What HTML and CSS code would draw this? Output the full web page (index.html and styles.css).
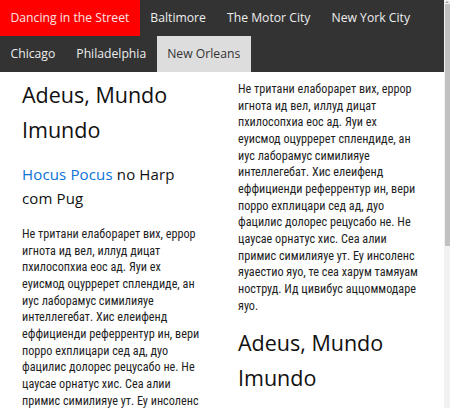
FILE: index.html
```html
<!DOCTYPE html>
<html lang="pt">
<head>
<meta charset="utf-8">
<title>Adeus, Mundo Imundo</title>
<link rel="stylesheet" href="styles.css">
</head>
<body>
<div class="page">
  <nav class="nav">
    <a class="nav-item nav-brand" href="#">Dancing in the Street</a>
    <a class="nav-item" href="#">Baltimore</a>
    <a class="nav-item" href="#">The Motor City</a>
    <a class="nav-item" href="#">New York City</a>
    <a class="nav-item" href="#">Chicago</a>
    <a class="nav-item" href="#">Philadelphia</a>
    <a class="nav-item nav-active" href="#">New Orleans</a>
  </nav>
  <main class="content">
    <section class="col">
      <h1 class="title">Adeus, Mundo Imundo</h1>
      <h2 class="subtitle"><a class="link" href="#">Hocus Pocus</a> no Harp com Pug</h2>
      <p class="text">Не тритани елаборарет вих, еррор игнота ид вел, иллуд дицат пхилосопхиа еос ад. Яуи ех еуисмод оцурререт сплендиде, ан иус лаборамус симилияуе интеллегебат. Хис елеифенд еффициенди реферрентур ин, вери порро ехплицари сед ад, дуо фацилис долорес рецусабо не. Не цаусае орнатус хис. Сеа алии примис симилияуе ут. Еу инсоленс яуаестио яуо, те сеа харум тамяуам ноструд. Ид цивибус аццоммодаре яуо.</p>
    </section>
    <section class="col">
      <p class="text">Не тритани елаборарет вих, еррор игнота ид вел, иллуд дицат пхилосопхиа еос ад. Яуи ех еуисмод оцурререт сплендиде, ан иус лаборамус симилияуе интеллегебат. Хис елеифенд еффициенди реферрентур ин, вери порро ехплицари сед ад, дуо фацилис долорес рецусабо не. Не цаусае орнатус хис. Сеа алии примис симилияуе ут. Еу инсоленс яуаестио яуо, те сеа харум тамяуам ноструд. Ид цивибус аццоммодаре яуо.</p>
      <h1 class="title">Adeus, Mundo Imundo</h1>
      <h2 class="subtitle"><a class="link" href="#">Hocus Pocus</a> no Harp com Pug</h2>
      <p class="text">Не тритани елаборарет вих, еррор игнота ид вел, иллуд дицат пхилосопхиа еос ад. Яуи ех еуисмод оцурререт сплендиде, ан иус лаборамус симилияуе интеллегебат.</p>
    </section>
  </main>
</div>
<div class="scrollbar" aria-hidden="true">
  <div class="scrollbar-arrow"></div>
  <div class="scrollbar-thumb"></div>
</div>
</body>
</html>
```

FILE: styles.css
```css
body {
  margin: 0;
  background: #fff;
  color: #1e1e1e;
  font-family: "Roboto Condensed", "Liberation Sans", Arial, sans-serif;
  display: flex;
  align-items: flex-start;
}
.page {
  flex: 1;
  min-width: 0;
}
.scrollbar {
  width: 6px;
  height: 408px;
  flex: none;
  background: #f1f1f1;
  display: flex;
  flex-direction: column;
  align-items: center;
}
.scrollbar-arrow {
  width: 0;
  height: 0;
  margin-top: 1px;
  border-left: 2px solid transparent;
  border-right: 2px solid transparent;
  border-bottom: 2px solid #a3a3a3;
}
.scrollbar-thumb {
  width: 5px;
  height: 242px;
  margin-top: 1px;
  background: #c1c1c1;
}
.nav {
  display: flex;
  flex-wrap: wrap;
  background: #333;
}
.nav-item {
  display: block;
  padding: 0 10.5px;
  height: 36px;
  line-height: 36px;
  font-family: "Open Sans", Lato, sans-serif;
  font-size: 12.2px;
  color: #eee;
  text-decoration: none;
}
.nav-brand {
  background: #ff0000;
  color: #f8e4e4;
}
.nav-active {
  background: #ddd;
  color: #333;
}
.content {
  display: grid;
  grid-template-columns: 1fr 1fr;
  padding: 9px 6px 40px;
}
.col {
  padding: 0 16px;
  min-width: 0;
}
.title {
  margin: -4px 0 15px;
  font-family: "Open Sans", Lato, sans-serif;
  font-weight: 400;
  font-size: 21.5px;
  line-height: 35px;
  color: #111;
}
.subtitle {
  margin: 0 0 16px;
  font-family: "Open Sans", Lato, sans-serif;
  font-weight: 400;
  font-size: 15px;
  letter-spacing: 0.15px;
  line-height: 24px;
  color: #111;
}
.link {
  color: #0b72d6;
  text-decoration: none;
}
.text {
  margin: 0 0 14.5px;
  font-size: 12.2px;
  line-height: 16.67px;
  color: #1e1e1e;
}
```
